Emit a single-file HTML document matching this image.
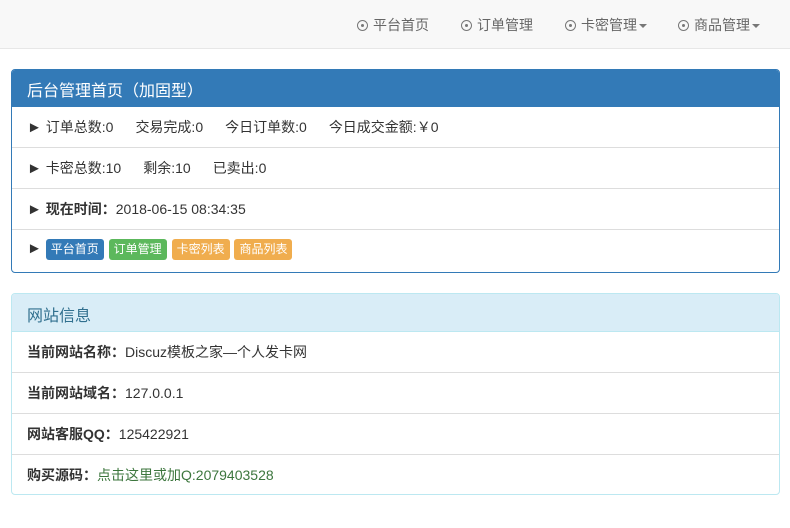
<!DOCTYPE html>
<html><head><meta charset="utf-8"><style>
*{box-sizing:border-box;margin:0;padding:0}
body{width:790px;height:528px;background:#fff;font-family:"Liberation Sans","Noto Sans CJK SC",sans-serif;font-size:14px;color:#333;overflow:hidden}
.nav{height:49px;background:#f8f8f8;border-bottom:1px solid #e7e7e7;position:relative}
.nav span{position:absolute;top:15px;color:#666;font-size:14px;white-space:nowrap}
.nav i{display:inline-block;width:11px;height:11px;border:1px solid #777;border-radius:50%;position:relative;margin-right:5px;vertical-align:-1px}
.nav i:after{content:"";position:absolute;left:3px;top:3px;width:3px;height:3px;background:#777;border-radius:50%}
.caret{display:inline-block;width:0;height:0;border-left:4px solid transparent;border-right:4px solid transparent;border-top:4px solid #777;vertical-align:2px;margin-left:2px}
.panel{position:absolute;left:11px;width:769px;border:1px solid #337ab7;border-radius:4px;overflow:hidden}
.p1{top:69px;height:204px}
.p2{top:293px;height:202px;border-color:#bce8f1}
.hd{height:37px;background:#337ab7;color:#fff;font-size:16px;padding:7px 15px}
.p2 .hd{background:#d9edf7;color:#31708f;border-bottom:1px solid #bce8f1;height:38px;padding-top:8px}
.row{height:41px;border-bottom:1px solid #ddd;padding:10px 15px;white-space:nowrap}
.row:last-child{border-bottom:none}
.row .g{margin-right:22px}
.tri{font-size:15px}
.tag{display:inline-block;color:#fff;font-size:12px;padding:3px 5px;border-radius:3px;margin-right:1px;line-height:15px}
b{font-weight:bold}
</style></head><body>
<div class="nav">
<span style="left:357px"><i></i>平台首页</span>
<span style="left:461px"><i></i>订单管理</span>
<span style="left:565px"><i></i>卡密管理<em class="caret"></em></span>
<span style="left:678px"><i></i>商品管理<em class="caret"></em></span>
</div>
<div class="panel p1">
<div class="hd">后台管理首页（加固型）</div>
<div class="row"><span class="tri">►</span> <span class="g">订单总数:0</span><span class="g">交易完成:0</span><span class="g">今日订单数:0</span><span>今日成交金额:￥0</span></div>
<div class="row"><span class="tri">►</span> <span class="g">卡密总数:10</span><span class="g">剩余:10</span><span>已卖出:0</span></div>
<div class="row"><span class="tri">►</span> <b>现在时间：</b>2018-06-15 08:34:35</div>
<div class="row" style="padding-top:9px"><span class="tri">►</span> <span class="tag" style="background:#337ab7">平台首页</span> <span class="tag" style="background:#5cb85c">订单管理</span> <span class="tag" style="background:#f0ad4e">卡密列表</span> <span class="tag" style="background:#f0ad4e">商品列表</span></div>
</div>
<div class="panel p2">
<div class="hd">网站信息</div>
<div class="row"><b>当前网站名称：</b>Discuz模板之家—个人发卡网</div>
<div class="row"><b>当前网站域名：</b>127.0.0.1</div>
<div class="row"><b>网站客服QQ：</b>125422921</div>
<div class="row"><b>购买源码：</b><span style="color:#3c763d">点击这里或加Q:2079403528</span></div>
</div>
</body></html>
